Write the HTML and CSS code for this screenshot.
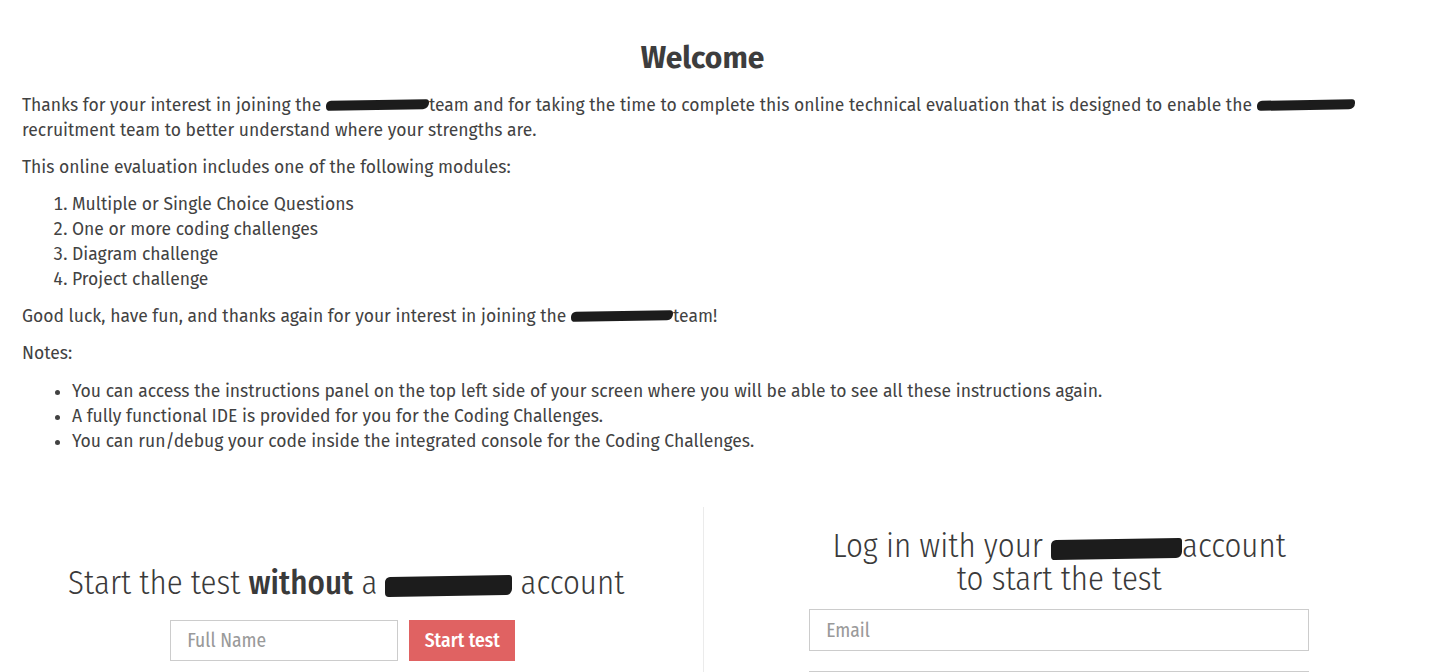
FILE: index.html
```html
<!DOCTYPE html>
<html lang="en">
<head>
<meta charset="utf-8">
<title>Welcome</title>
<link rel="stylesheet" href="styles.css">
</head>
<body>
<main class="page">
  <h1 class="title">Welcome</h1>
  <p>Thanks for your interest in joining the <span class="redact r1"></span>team and for taking the time to complete this online technical evaluation that is designed to enable the <span class="redact r2"></span> recruitment team to better understand where your strengths are.</p>
  <p>This online evaluation includes one of the following modules:</p>
  <ol class="list">
    <li>Multiple or Single Choice Questions</li>
    <li>One or more coding challenges</li>
    <li>Diagram challenge</li>
    <li>Project challenge</li>
  </ol>
  <p>Good luck, have fun, and thanks again for your interest in joining the <span class="redact r3"></span>team!</p>
  <p class="notes">Notes:</p>
  <ul class="list">
    <li>You can access the instructions panel on the top left side of your screen where you will be able to see all these instructions again.</li>
    <li>A fully functional IDE is provided for you for the Coding Challenges.</li>
    <li>You can run/debug your code inside the integrated console for the Coding Challenges.</li>
  </ul>

  <section class="start">
    <div class="col col-left">
      <h2 class="col-title">Start the test <strong>without</strong> a <span class="redact big r4"></span> account</h2>
      <form class="inline-form">
        <input class="field field-name" type="text" placeholder="Full Name">
        <button class="btn" type="button">Start test</button>
      </form>
    </div>
    <div class="col col-right">
      <h2 class="col-title">Log in with your <span class="redact big r5"></span>account<br>to start the test</h2>
      <form class="stack-form">
        <input class="field field-wide" type="email" placeholder="Email">
        <input class="field field-wide" type="password" placeholder="Password">
      </form>
    </div>
  </section>
</main>
</body>
</html>
```

FILE: styles.css
```css
* { box-sizing: border-box; }

html, body {
  margin: 0;
  padding: 0;
  background: #fff;
}

body {
  font-family: "Fira Sans", "Open Sans", "Noto Sans", sans-serif;
  font-size: 17.5px;
  line-height: 25px;
  color: #424242;
}

.page {
  width: 1405px;
  padding: 0 22px;
}

.title {
  margin: 0 0 16px;
  padding-top: 39px;
  text-align: center;
  font-size: 30px;
  line-height: 38px;
  font-weight: 700;
  color: #3d3d3d;
}

p {
  margin: 12px 0;
}

.notes {
  margin-bottom: 13px;
}

.list {
  margin: 12px 0;
  padding-left: 50px;
}

.redact {
  display: inline-block;
  width: 103px;
  height: 10px;
  background: #1c1c1c;
  border-radius: 5px 3px 6px 4px;
  vertical-align: 1px;
  transform: skewY(-1deg);
}

.r2 { width: 98px; }
.r3 { width: 102px; }

.redact.big {
  height: 20px;
  vertical-align: -2px;
}
.r4 { width: 127px; }
.r5 { width: 131px; }

.start {
  display: grid;
  grid-template-columns: 1fr 1fr;
  margin-top: 53px;
}

.col {
  display: flex;
  flex-direction: column;
  align-items: center;
}

.col-left {
  padding: 60px 32px 0 0;
}

.col-right {
  border-left: 1px solid #ebebeb;
  padding: 23px 0 0 32px;
}

.col-title {
  margin: 0;
  font-family: "Fira Sans Condensed", "Roboto", sans-serif;
  font-weight: 300;
  font-size: 32.8px;
  line-height: 33px;
  color: #3a3a3a;
  text-align: center;
}

.col-title strong {
  font-weight: 500;
}

.inline-form {
  display: flex;
  gap: 11px;
  margin-top: 20px;
  margin-right: 7px;
}

.stack-form {
  display: flex;
  flex-direction: column;
  gap: 20px;
  margin-top: 13px;
}

.field {
  font-family: "Fira Sans Condensed", "Fira Sans", sans-serif;
  font-size: 19.5px;
  color: #404040;
  border: 1px solid #cccccc;
  border-radius: 0;
  padding: 0 16px;
  background: #fff;
  outline: none;
}

.field::placeholder {
  color: #9a9a9a;
}

.field-name {
  width: 228px;
  height: 41px;
}

.field-wide {
  width: 500px;
  height: 42px;
}

.btn {
  width: 106px;
  height: 41px;
  border: none;
  border-radius: 0;
  background: #e06262;
  color: #fff;
  font-family: "Fira Sans Condensed", "Fira Sans", sans-serif;
  font-size: 19.5px;
  font-weight: 500;
  padding: 0;
  cursor: pointer;
}
```
